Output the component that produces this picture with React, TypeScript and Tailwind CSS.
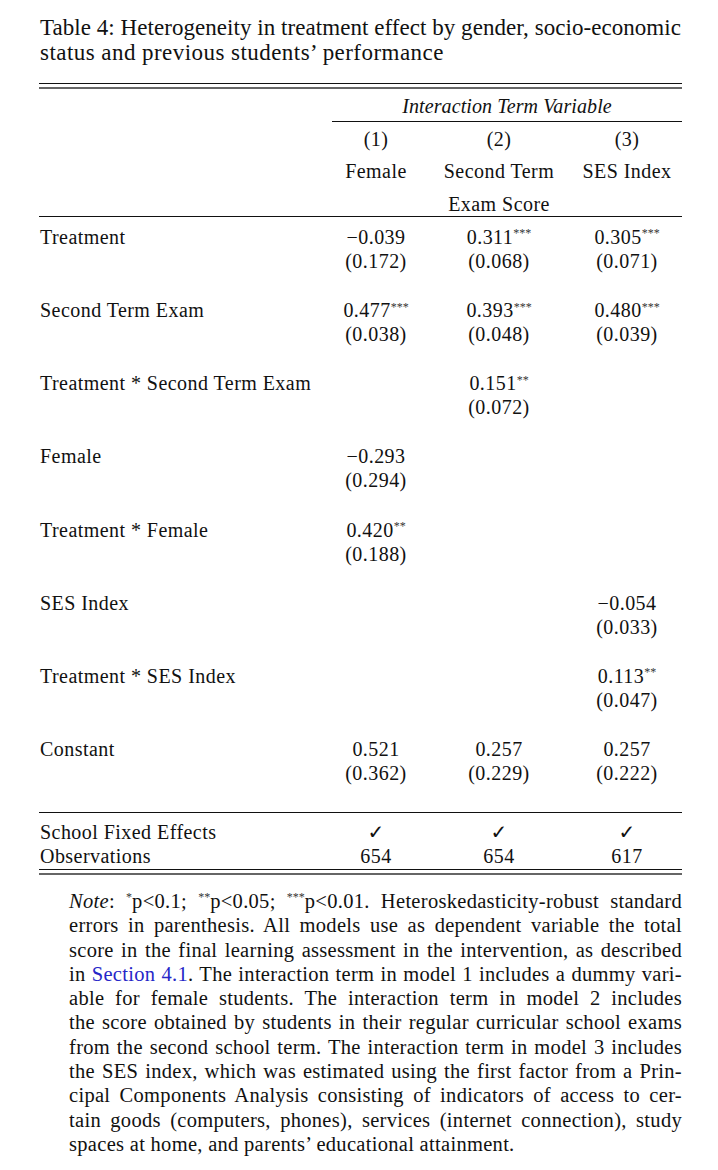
import React from "react";

const serif = { fontFamily: '"Liberation Serif", "Times New Roman", serif' };

function Star({ n }: { n: number }) {
  return <sup className="text-[12px] text-[#333] top-[-0.55em] tracking-[0px]">{"*".repeat(n)}</sup>;
}

type Cell = { v: string; s?: number; se: string } | null;

const rows: { label: string; cells: Cell[] }[] = [
  { label: "Treatment", cells: [{ v: "−0.039", se: "(0.172)" }, { v: "0.311", s: 3, se: "(0.068)" }, { v: "0.305", s: 3, se: "(0.071)" }] },
  { label: "Second Term Exam", cells: [{ v: "0.477", s: 3, se: "(0.038)" }, { v: "0.393", s: 3, se: "(0.048)" }, { v: "0.480", s: 3, se: "(0.039)" }] },
  { label: "Treatment * Second Term Exam", cells: [null, { v: "0.151", s: 2, se: "(0.072)" }, null] },
  { label: "Female", cells: [{ v: "−0.293", se: "(0.294)" }, null, null] },
  { label: "Treatment * Female", cells: [{ v: "0.420", s: 2, se: "(0.188)" }, null, null] },
  { label: "SES Index", cells: [null, null, { v: "−0.054", se: "(0.033)" }] },
  { label: "Treatment * SES Index", cells: [null, null, { v: "0.113", s: 2, se: "(0.047)" }] },
  { label: "Constant", cells: [{ v: "0.521", se: "(0.362)" }, { v: "0.257", se: "(0.229)" }, { v: "0.257", se: "(0.222)" }] },
];

const colCls = ["text-center", "text-center", "text-center pr-[6px]"];

function NoteLine({ children, last }: { children: React.ReactNode; last?: boolean }) {
  return (
    <div className={last ? "text-left whitespace-nowrap" : "text-justify [text-align-last:justify] whitespace-nowrap"}>
      {children}
    </div>
  );
}

function Check() {
  return (
    <span className="text-[20px] leading-[24px]" style={{ fontFamily: '"DejaVu Sans", sans-serif' }}>
      ✓
    </span>
  );
}

export default function App() {
  return (
    <div className="w-[718px] h-[1170px] bg-white text-[#111] overflow-hidden" style={serif}>
      {/* Title */}
      <div className="pl-[40px] pt-[15px] text-[23px] leading-[25px]">
        <div className="whitespace-nowrap tracking-[0.05px]">Table 4: Heterogeneity in treatment effect by gender, socio-economic</div>
        <div className="whitespace-nowrap tracking-[0.45px]">status and previous students’ performance</div>
      </div>

      <div className="ml-[39px] w-[643px] text-[20px] tracking-[0.45px]">
        {/* top double rule */}
        <div className="mt-[18px] h-[1px] bg-[#111]" />
        <div className="mt-[3px] h-[2px] bg-[#666]" />

        {/* header */}
        <div className="grid grid-cols-[293px_88px_158px_104px] leading-[24px]">
          <div />
          <div className="col-span-3 text-center italic mt-[5px] tracking-[0.1px]">Interaction Term Variable</div>
          <div />
          <div className="col-span-3 mt-[3px] h-[1px] bg-[#111]" />

          <div />
          <div className={colCls[0] + " mt-[5px]"}>(1)</div>
          <div className={colCls[1] + " mt-[5px]"}>(2)</div>
          <div className={colCls[2] + " mt-[5px]"}>(3)</div>

          <div />
          <div className={colCls[0] + " mt-[8px]"}>Female</div>
          <div className={colCls[1] + " mt-[8px] whitespace-nowrap"}>Second Term</div>
          <div className={colCls[2] + " mt-[8px] whitespace-nowrap"}>SES Index</div>

          <div />
          <div />
          <div className={colCls[1] + " mt-[9px] whitespace-nowrap"}>Exam Score</div>
          <div />
        </div>
        <div className="h-[1px] bg-[#111]" />

        {/* body */}
        <div className="mt-[8px] flex flex-col gap-[25.15px] leading-[24px]">
          {rows.map((r) => (
            <div key={r.label} className="grid grid-cols-[293px_88px_158px_104px]">
              <div className="pl-[1px] whitespace-nowrap">{r.label}</div>
              {r.cells.map((c, i) => (
                <div key={i} className={colCls[i] + " whitespace-nowrap"}>
                  {c ? (
                    <>
                      <div>
                        {c.v}
                        {c.s ? <Star n={c.s} /> : null}
                      </div>
                      <div>{c.se}</div>
                    </>
                  ) : null}
                </div>
              ))}
            </div>
          ))}
        </div>

        <div className="mt-[27px] h-[1px] bg-[#111]" />
        <div className="mt-[7px] grid grid-cols-[293px_88px_158px_104px] leading-[24px]">
          <div className="pl-[1px] whitespace-nowrap">School Fixed Effects</div>
          <div className={colCls[0]}><Check /></div>
          <div className={colCls[1]}><Check /></div>
          <div className={colCls[2]}><Check /></div>
          <div className="pl-[1px]">Observations</div>
          <div className={colCls[0]}>654</div>
          <div className={colCls[1]}>654</div>
          <div className={colCls[2]}>617</div>
        </div>
        <div className="mt-[1px] h-[1px] bg-[#111]" />
        <div className="mt-[3px] h-[2px] bg-[#666]" />
      </div>

      {/* Note */}
      <div className="ml-[69px] w-[613px] mt-[14px] text-[20.5px] leading-[24.3px] tracking-[0.3px]">
        <NoteLine>
          <i>Note</i>: <Star n={1} />p&lt;0.1; <Star n={2} />p&lt;0.05; <Star n={3} />p&lt;0.01. Heteroskedasticity-robust standard
        </NoteLine>
        <NoteLine>errors in parenthesis. All models use as dependent variable the total</NoteLine>
        <NoteLine>score in the final learning assessment in the intervention, as described</NoteLine>
        <NoteLine>
          in <span className="text-[#2626c8]">Section 4.1</span>. The interaction term in model 1 includes a dummy vari-
        </NoteLine>
        <NoteLine>able for female students. The interaction term in model 2 includes</NoteLine>
        <NoteLine>the score obtained by students in their regular curricular school exams</NoteLine>
        <NoteLine>from the second school term. The interaction term in model 3 includes</NoteLine>
        <NoteLine>the SES index, which was estimated using the first factor from a Prin-</NoteLine>
        <NoteLine>cipal Components Analysis consisting of indicators of access to cer-</NoteLine>
        <NoteLine>tain goods (computers, phones), services (internet connection), study</NoteLine>
        <NoteLine last>spaces at home, and parents’ educational attainment.</NoteLine>
      </div>
    </div>
  );
}
